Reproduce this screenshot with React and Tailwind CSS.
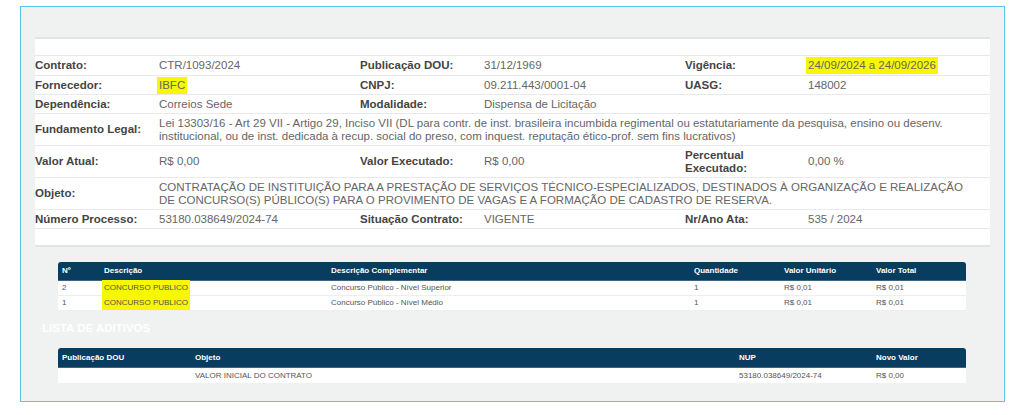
const font = { fontFamily: '"Liberation Sans", Arial, sans-serif' };

function Hl({ children }) {
  return <span className="bg-[#f7f700] px-[2px] -mx-[2px] py-[2px]">{children}</span>;
}

function Label({ children, className = "" }) {
  return (
    <div className={"flex items-center font-bold text-[11.5px] leading-[13px] text-[#444] " + className}>
      {children}
    </div>
  );
}

function Value({ children, className = "" }) {
  return (
    <div className={"flex items-center text-[11.5px] leading-[13px] text-[#666] " + className}>
      {children}
    </div>
  );
}

function InfoRow({ h, children }) {
  return (
    <div className={"grid grid-cols-[124px_201px_124px_201px_123px_1fr] border-b border-[#e9e9e9] " + h}>
      {children}
    </div>
  );
}

const items = [
  { n: "2", desc: "CONCURSO PUBLICO", comp: "Concurso Público - Nível Superior", qt: "1", vu: "R$ 0,01", vt: "R$ 0,01" },
  { n: "1", desc: "CONCURSO PUBLICO", comp: "Concurso Público - Nível Médio", qt: "1", vu: "R$ 0,01", vt: "R$ 0,01" },
];

export default function App() {
  return (
    <div className="w-[1024px] h-[415px] bg-white pt-[6px] pl-[20px]" style={font}>
      <div className="w-[985px] h-[396px] border border-[#5ec6ee] bg-[#f0f1f1] pt-[30px] pl-[14px]">
        {/* contract details */}
        <div className="w-[955px] bg-white border-t-2 border-b-2 border-[#e3e4e4]">
          <div className="h-[17px] border-b border-[#e9e9e9]" />
          <InfoRow h="h-[20px]">
            <Label>Contrato:</Label>
            <Value>CTR/1093/2024</Value>
            <Label>Publicação DOU:</Label>
            <Value>31/12/1969</Value>
            <Label>Vigência:</Label>
            <Value><Hl>24/09/2024 a 24/09/2026</Hl></Value>
          </InfoRow>
          <InfoRow h="h-[19px]">
            <Label>Fornecedor:</Label>
            <Value><Hl>IBFC</Hl></Value>
            <Label>CNPJ:</Label>
            <Value>09.211.443/0001-04</Value>
            <Label>UASG:</Label>
            <Value>148002</Value>
          </InfoRow>
          <InfoRow h="h-[19px]">
            <Label>Dependência:</Label>
            <Value>Correios Sede</Value>
            <Label>Modalidade:</Label>
            <Value>Dispensa de Licitação</Value>
            <div />
            <div />
          </InfoRow>
          <InfoRow h="h-[32px]">
            <Label>Fundamento Legal:</Label>
            <Value className="col-span-5 pr-[10px]">
              Lei 13303/16 - Art 29 VII - Artigo 29, Inciso VII (DL para contr. de inst. brasileira incumbida regimental ou estatutariamente da pesquisa, ensino ou desenv. institucional, ou de inst. dedicada à recup. social do preso, com inquest. reputação ético-prof. sem fins lucrativos)
            </Value>
          </InfoRow>
          <InfoRow h="h-[32px]">
            <Label>Valor Atual:</Label>
            <Value>R$ 0,00</Value>
            <Label>Valor Executado:</Label>
            <Value>R$ 0,00</Value>
            <Label>Percentual<br />Executado:</Label>
            <Value>0,00 %</Value>
          </InfoRow>
          <InfoRow h="h-[32px]">
            <Label>Objeto:</Label>
            <Value className="col-span-5 pr-[10px]">
              CONTRATAÇÃO DE INSTITUIÇÃO PARA A PRESTAÇÃO DE SERVIÇOS TÉCNICO-ESPECIALIZADOS, DESTINADOS À ORGANIZAÇÃO E REALIZAÇÃO DE CONCURSO(S) PÚBLICO(S) PARA O PROVIMENTO DE VAGAS E A FORMAÇÃO DE CADASTRO DE RESERVA.
            </Value>
          </InfoRow>
          <InfoRow h="h-[19px]">
            <Label>Número Processo:</Label>
            <Value>53180.038649/2024-74</Value>
            <Label>Situação Contrato:</Label>
            <Value>VIGENTE</Value>
            <Label>Nr/Ano Ata:</Label>
            <Value>535 / 2024</Value>
          </InfoRow>
          <div className="h-[16px]" />
        </div>

        {/* items table */}
        <div className="ml-[23px] mt-[15px] w-[908px] text-[8px]">
          <div className="grid grid-cols-[42px_227px_363px_90px_92px_1fr] h-[19px] items-center bg-[#093d5f] rounded-t-[3px] text-white font-bold pl-[4px] border-b border-[#3d6480]">
            <div>Nº</div>
            <div>Descrição</div>
            <div>Descrição Complementar</div>
            <div>Quantidade</div>
            <div>Valor Unitário</div>
            <div>Valor Total</div>
          </div>
          {items.map((it, i) => (
            <div
              key={i}
              className="grid grid-cols-[42px_227px_363px_90px_92px_1fr] h-[15px] items-center bg-white text-[#555] pl-[4px] border-b border-[#eeeeee]"
            >
              <div>{it.n}</div>
              <div><span className="bg-[#f7f700] px-[2px] -ml-[2px] py-[3px]">{it.desc}</span></div>
              <div>{it.comp}</div>
              <div>{it.qt}</div>
              <div>{it.vu}</div>
              <div>{it.vt}</div>
            </div>
          ))}
        </div>

        <div className="ml-[7px] mt-[9px] h-[18px] flex items-center text-[11.5px] font-bold text-white">
          LISTA DE ADITIVOS
        </div>

        {/* aditivos table */}
        <div className="ml-[23px] mt-[10px] w-[908px] text-[8px]">
          <div className="grid grid-cols-[133px_544px_137px_1fr] h-[20px] items-center bg-[#093d5f] rounded-t-[3px] text-white font-bold pl-[4px] border-b border-[#3d6480]">
            <div>Publicação DOU</div>
            <div>Objeto</div>
            <div>NUP</div>
            <div>Novo Valor</div>
          </div>
          <div className="grid grid-cols-[133px_544px_137px_1fr] h-[15px] items-center bg-white text-[#555] pl-[4px]">
            <div></div>
            <div>VALOR INICIAL DO CONTRATO</div>
            <div>53180.038649/2024-74</div>
            <div>R$ 0,00</div>
          </div>
        </div>
      </div>
    </div>
  );
}
